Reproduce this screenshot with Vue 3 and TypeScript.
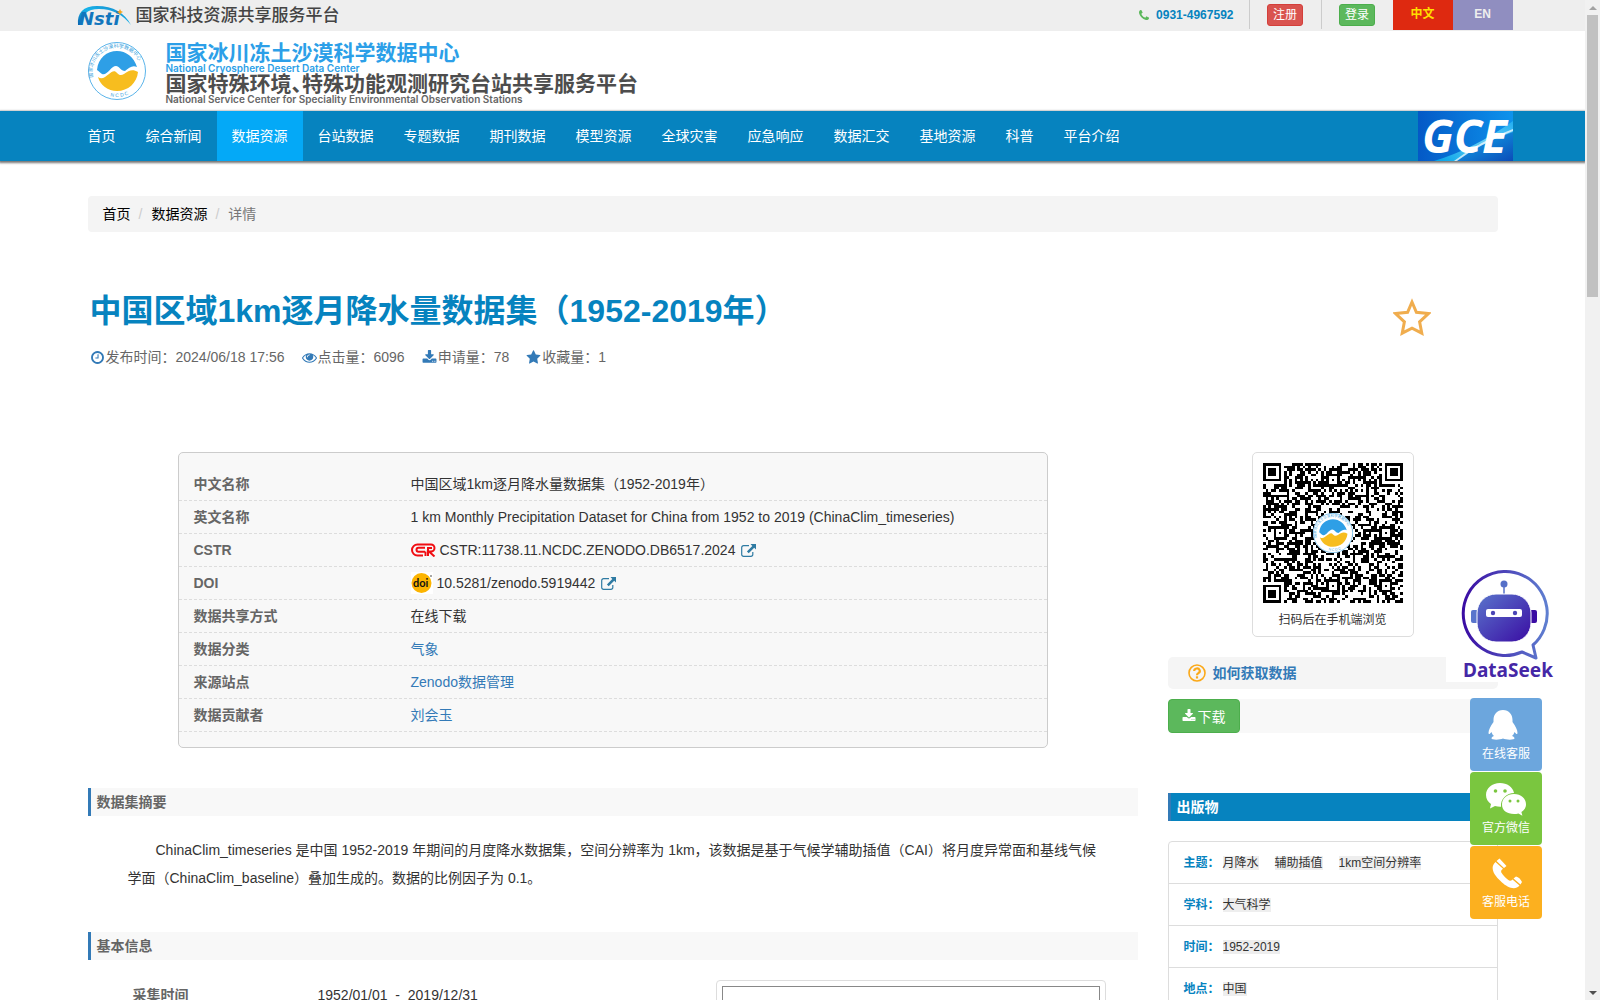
<script setup lang="ts">
interface NavItem {
  label: string
  active?: boolean
}

const navItems: NavItem[] = [
  { label: '首页' },
  { label: '综合新闻' },
  { label: '数据资源', active: true },
  { label: '台站数据' },
  { label: '专题数据' },
  { label: '期刊数据' },
  { label: '模型资源' },
  { label: '全球灾害' },
  { label: '应急响应' },
  { label: '数据汇交' },
  { label: '基地资源' },
  { label: '科普' },
  { label: '平台介绍' },
]

interface Detail {
  label: string
  value: string
  kind?: 'cstr' | 'doi' | 'link'
}

const details: Detail[] = [
  { label: '中文名称', value: '中国区域1km逐月降水量数据集（1952-2019年）' },
  { label: '英文名称', value: '1 km Monthly Precipitation Dataset for China from 1952 to 2019 (ChinaClim_timeseries)' },
  { label: 'CSTR', value: 'CSTR:11738.11.NCDC.ZENODO.DB6517.2024', kind: 'cstr' },
  { label: 'DOI', value: '10.5281/zenodo.5919442', kind: 'doi' },
  { label: '数据共享方式', value: '在线下载' },
  { label: '数据分类', value: '气象', kind: 'link' },
  { label: '来源站点', value: 'Zenodo数据管理', kind: 'link' },
  { label: '数据贡献者', value: '刘会玉', kind: 'link' },
]

const facets: { label: string; tags: string[] }[] = [
  { label: '主题：', tags: ['月降水', '辅助插值', '1km空间分辨率'] },
  { label: '学科：', tags: ['大气科学'] },
  { label: '时间：', tags: ['1952-2019'] },
  { label: '地点：', tags: ['中国'] },
]

const icons = {
  phone:
    'M1408 1112q0 27-10 70.5t-21 68.5q-21 50-122 106-94 51-186 51-27 0-52.5-3.5t-57.5-12.5-47.5-14.5-55.5-20.5-49-18q-98-35-175-83-128-79-264.5-215.5t-215.5-264.5q-48-77-83-175-3-9-18-49t-20.5-55.5-14.5-47.5-12.5-57.5-3.5-52.5q0-92 51-186 56-101 106-122 25-11 68.5-21t70.5-10q14 0 21 3 18 6 53 76 11 19 30 54t35 63.5 31 53.5q3 4 17.5 25t21.5 35.5 7 28.5q0 20-28.5 50t-62 55-62 53-28.5 46q0 9 5 22.5t8.5 20.5 14 24 11.5 19q76 137 174 235t235 174q2 1 19 11.5t24 14 20.5 8.5 22.5 5q18 0 46-28.5t53-62 55-62 50-28.5q14 0 28.5 7t35.5 21.5 25 17.5q25 15 53.5 31t63.5 35 54 30q70 35 76 53 3 7 3 21z',
  clock:
    'M1024 544v448q0 14-9 23t-23 9h-320q-14 0-23-9t-9-23v-64q0-14 9-23t23-9h224v-352q0-14 9-23t23-9h64q14 0 23 9t9 23zm416 352q0-148-73-273t-198-198-273-73-273 73-198 198-73 273 73 273 198 198 273 73 273-73 198-198 73-273zm224 0q0 209-103 385.5t-279.5 279.5-385.5 103-385.5-103-279.5-279.5-103-385.5 103-385.5 279.5-279.5 385.5-103 385.5 103 279.5 279.5 103 385.5z',
  eye: 'M1664 960q-152-236-381-353 61 104 61 225 0 185-131.5 316.5t-316.5 131.5-316.5-131.5-131.5-316.5q0-121 61-225-229 117-381 353 133 205 333.5 326.5t434.5 121.5 434.5-121.5 333.5-326.5zm-720-384q0-20-14-34t-34-14q-125 0-214.5 89.5t-89.5 214.5q0 20 14 34t34 14 34-14 14-34q0-86 61-147t147-61q20 0 34-14t14-34zm848 384q0 34-20 69-140 230-376.5 368.5t-499.5 138.5-499.5-139-376.5-368q-20-35-20-69t20-69q140-229 376.5-368t499.5-139 499.5 139 376.5 368q20 35 20 69z',
  download:
    'M1344 1344q0-26-19-45t-45-19-45 19-19 45 19 45 45 19 45-19 19-45zm256 0q0-26-19-45t-45-19-45 19-19 45 19 45 45 19 45-19 19-45zm128-224v320q0 40-28 68t-68 28h-1472q-40 0-68-28t-28-68v-320q0-40 28-68t68-28h465l135 136q58 56 136 56t136-56l136-136h464q40 0 68 28t28 68zm-325-569q17 41-14 70l-448 448q-18 19-45 19t-45-19l-448-448q-31-29-14-70 17-39 59-39h256v-448q0-26 19-45t45-19h256q26 0 45 19t19 45v448h256q42 0 59 39z',
  star: 'M1728 647q0 22-26 48l-363 354 86 500q1 7 1 20 0 21-10.5 35.5t-30.5 14.5q-19 0-40-12l-449-236-449 236q-22 12-40 12-21 0-31.5-14.5t-10.5-35.5q0-6 2-20l86-500-364-354q-25-27-25-48 0-37 56-46l502-73 225-455q19-41 49-41t49 41l225 455 502 73q56 9 56 46z',
}

const stats = [
  { icon: icons.clock, label: '发布时间：', value: '2024/06/18 17:56' },
  { icon: icons.eye, label: '点击量：', value: '6096' },
  { icon: icons.download, label: '申请量：', value: '78' },
  { icon: icons.star, label: '收藏量：', value: '1' },
]

// Version 9 QR symbol: fixed function patterns with a seeded data area.
const QR_SIZE = 53

function buildQr(): string {
  const cells: boolean[][] = []
  let seed = 20190607
  for (let y = 0; y < QR_SIZE; y++) {
    const row: boolean[] = []
    for (let x = 0; x < QR_SIZE; x++) {
      seed = (seed * 1103515245 + 12345) % 2147483648
      row.push(seed / 2147483648 > 0.5)
    }
    cells.push(row)
  }
  for (let i = 0; i < QR_SIZE; i++) {
    cells[6][i] = i % 2 === 0
    cells[i][6] = i % 2 === 0
  }
  const square = (cx: number, cy: number, reach: number, light: number[]) => {
    for (let dy = -reach; dy <= reach; dy++) {
      for (let dx = -reach; dx <= reach; dx++) {
        const x = cx + dx
        const y = cy + dy
        if (x < 0 || y < 0 || x >= QR_SIZE || y >= QR_SIZE) continue
        cells[y][x] = !light.includes(Math.max(Math.abs(dx), Math.abs(dy)))
      }
    }
  }
  for (const cy of [6, 26, 46]) {
    for (const cx of [6, 26, 46]) square(cx, cy, 2, [1])
  }
  square(3, 3, 4, [2, 4])
  square(QR_SIZE - 4, 3, 4, [2, 4])
  square(3, QR_SIZE - 4, 4, [2, 4])
  let d = ''
  cells.forEach((row, y) => row.forEach((on, x) => { if (on) d += `M${x} ${y}h1v1h-1z` }))
  return d
}

const qrPath = buildQr()
</script>

<template>
  <div class="window">
    <div class="page">
      <svg class="defs" width="0" height="0" aria-hidden="true">
        <defs>
          <path id="ring-top" d="M7 41A24.500 24.500 0 1 1 51 41" />
          <path id="ring-bottom" d="M15 51A27 27 0 0 0 43 51" />
          <symbol id="emblem" viewBox="0 0 58 58">
            <circle cx="29" cy="29" r="29" fill="#fff" />
            <circle cx="29" cy="29" r="28.500" fill="none" stroke="#5ab4ea" stroke-width="1" />
            <path d="M9 28C10 16 19 9 29 9c9 0 17 6 20 16-5-2-8 1-12 4-4 0-6-5-9-5-5 0-9 10-14 8-2-1-3-3-5-4z" fill="#2e9fe6" />
            <path d="M10 35c4 3 7 0 11-3 3-3 6-4 8-1 2 2 4 3 7 1 5-4 9-5 14-2-1 11-10 19-21 19-9 0-17-6-19-14z" fill="#f7bd1f" />
            <text font-size="5" fill="#3a9fdc" font-family="Noto Sans CJK SC"><textPath href="#ring-top" startOffset="6">国家冰川冻土沙漠科学数据中心</textPath></text>
            <text font-size="5" fill="#3a9fdc" font-family="Liberation Sans"><textPath href="#ring-bottom" startOffset="8">N C D C</textPath></text>
          </symbol>
          <symbol id="external" viewBox="0 0 15 13">
            <path d="M8 1.700H2.500a1.800 1.800 0 0 0-1.800 1.800v7a1.800 1.800 0 0 0 1.800 1.800h7.500a1.800 1.800 0 0 0 1.800-1.800V8" fill="none" stroke="currentColor" stroke-width="1.200" />
            <path d="M9.500 0H15v5.500l-1.800-1.800L7.700 9.200 5.900 7.400l5.400-5.500z" fill="currentColor" />
          </symbol>
        </defs>
      </svg>

      <div class="topbar">
        <div class="container topbar-row">
          <a class="platform" href="#">
            <svg class="nsti" width="54" height="22" viewBox="0 0 54 22">
              <defs>
                <linearGradient id="swoosh" x1="0" y1="1" x2="1" y2="0">
                  <stop offset="0" stop-color="#0a62ad" />
                  <stop offset=".5" stop-color="#16b4ea" />
                  <stop offset="1" stop-color="#1b7fc4" />
                </linearGradient>
              </defs>
              <path d="M1 20C0 8 6 1 20 1c16 0 28 7 34 19-8-10-18-16-32-16C10 4 5 9 4 20z" fill="url(#swoosh)" />
              <text x="2" y="20" font-size="18" font-weight="bold" font-style="italic" font-family="DejaVu Sans" fill="#1276bd">Nsti</text>
              <path d="M43 4l1 2 2 1-2 1-1 2-1-2-2-1 2-1z" fill="#f6a51c" />
            </svg>
            <span>国家科技资源共享服务平台</span>
          </a>
          <div class="tools">
            <a class="hotline" href="#">
              <svg width="10" height="10" viewBox="0 0 1408 1408"><path :d="icons.phone" fill="currentColor" /></svg>
              <span>0931-4967592</span>
            </a>
            <div class="tool"><button class="small-btn red" type="button">注册</button></div>
            <div class="tool"><button class="small-btn green" type="button">登录</button></div>
            <a class="lang zh" href="#">中文</a>
            <a class="lang en" href="#">EN</a>
          </div>
        </div>
      </div>

      <header class="container brand">
        <svg class="brand-mark" width="58" height="58"><use href="#emblem" /></svg>
        <div class="brand-text">
          <div class="brand-cn blue">国家冰川冻土沙漠科学数据中心</div>
          <div class="brand-en blue">National Cryosphere Desert Data Center</div>
          <div class="brand-cn second">国家特殊环境<span class="mark">、</span>特殊功能观测研究台站共享服务平台</div>
          <div class="brand-en">National Service Center for Speciality Environmental Observation Stations</div>
        </div>
      </header>

      <nav class="nav">
        <div class="container nav-row">
          <a v-for="item in navItems" :key="item.label" href="#" :class="{ active: item.active }">{{ item.label }}</a>
          <svg class="gce" width="95" height="50" viewBox="0 0 95 50">
            <defs>
              <linearGradient id="sky" x1="0" y1="0" x2="1" y2="0">
                <stop offset="0" stop-color="#0459c6" />
                <stop offset="1" stop-color="#0d93ec" />
              </linearGradient>
              <linearGradient id="earth" x1="0" y1="0" x2="1" y2="1">
                <stop offset="0" stop-color="#13b5f4" />
                <stop offset="1" stop-color="#0b4cb8" />
              </linearGradient>
              <linearGradient id="glow" x1="0" y1="1" x2="1" y2="0">
                <stop offset="0" stop-color="#06b4ee" />
                <stop offset=".6" stop-color="#7fe0fb" />
                <stop offset="1" stop-color="#25b4f3" />
              </linearGradient>
            </defs>
            <rect width="95" height="50" fill="url(#sky)" />
            <path d="M34 50Q60 26 95 20V50z" fill="url(#earth)" />
            <path d="M16 50Q56 38 95 10V21Q62 32 38 50z" fill="url(#glow)" opacity=".8" />
            <path d="M36 50Q62 30 95 18V20Q62 33 39 50z" fill="#fff" opacity=".7" />
            <text x="4" y="42" font-size="46" font-weight="bold" font-style="italic" font-family="Open Sans" fill="#fff">GCE</text>
          </svg>
        </div>
      </nav>

      <main class="container">
        <ol class="breadcrumb">
          <li><a href="#">首页</a></li>
          <li><a href="#">数据资源</a></li>
          <li>详情</li>
        </ol>

        <div class="heading">
          <div class="heading-main">
            <h1>中国区域1km逐月降水量数据集（1952-2019年）</h1>
            <ul class="stats">
              <li v-for="s in stats" :key="s.label">
                <svg width="15" height="15" viewBox="0 0 1792 1792"><path :d="s.icon" fill="currentColor" /></svg>
                <span>{{ s.label }}{{ s.value }}</span>
              </li>
            </ul>
          </div>
          <button class="favorite" type="button" aria-label="收藏">
            <svg width="38" height="38" viewBox="0 0 38 38">
              <path d="M19 4l4.400 10.300 12 1.300-8.800 8.200 2.200 11.400L19 30.200 9.200 35.200l2.200-11.400-8.800-8.200 12-1.300z" fill="none" stroke="#f0ad4e" stroke-width="3" />
            </svg>
          </button>
        </div>

        <div class="columns">
          <div class="primary">
            <dl class="details">
              <div v-for="d in details" :key="d.label" class="detail">
                <dt>{{ d.label }}</dt>
                <dd>
                  <svg v-if="d.kind === 'cstr'" width="25" height="14" viewBox="0 0 25 14" fill="none" stroke="#f00d12" stroke-width="2">
                    <path d="M12 12.500H6.500a5.500 5.500 0 0 1 0-11H20a3.500 3.500 0 0 1 0 7H18l5.500 5" />
                    <path d="M14 4.800H7.500a2 2 0 0 0 0 4H14M14.500 8.500V13M17 13V5h4" />
                  </svg>
                  <svg v-if="d.kind === 'doi'" width="22" height="22" viewBox="0 0 22 22">
                    <rect width="22" height="22" fill="#fff" />
                    <circle cx="10.500" cy="11" r="10" fill="#fcb400" />
                    <circle cx="20" cy="4" r="1" fill="#888" />
                    <text x="2" y="15" font-size="11" font-weight="bold" font-family="Lato" fill="#111">doi</text>
                  </svg>
                  <a v-if="d.kind === 'link'" href="#">{{ d.value }}</a>
                  <span v-else>{{ d.value }}</span>
                  <a v-if="d.kind === 'cstr' || d.kind === 'doi'" class="out" href="#" aria-label="打开链接">
                    <svg width="15" height="13"><use href="#external" /></svg>
                  </a>
                </dd>
              </div>
            </dl>

            <h2 class="section-title">数据集摘要</h2>
            <p class="abstract">
              ChinaClim_timeseries 是中国 1952-2019 年期间的月度降水数据集，空间分辨率为 1km，该数据是基于气候学辅助插值（CAI）将月度异常面和基线气候学面（ChinaClim_baseline）叠加生成的。数据的比例因子为 0.1。
            </p>

            <h2 class="section-title">基本信息</h2>
            <div class="basics">
              <dl class="basic-list">
                <dt>采集时间</dt>
                <dd>1952/01/01&nbsp; -&nbsp; 2019/12/31</dd>
              </dl>
              <div class="map-frame"><div class="map"></div></div>
            </div>
          </div>

          <aside class="secondary">
            <div class="qr-card">
              <div class="qr">
                <svg width="140" height="140" :viewBox="`0 0 ${QR_SIZE} ${QR_SIZE}`" shape-rendering="crispEdges"><path :d="qrPath" /></svg>
                <svg class="qr-mark" width="40" height="40"><use href="#emblem" /></svg>
              </div>
              <div class="qr-label">扫码后在手机端浏览</div>
            </div>

            <a class="howto" href="#">
              <svg width="18" height="18" viewBox="0 0 18 18" fill="none" stroke="#fba919" stroke-width="1.600">
                <circle cx="9" cy="9" r="8" />
                <path d="M6.200 7a2.800 2.500 0 1 1 4.200 2.100C9.400 9.700 9 10 9 11.200" stroke-width="2.200" />
                <path d="M9 12.300v2.200" stroke-width="2.200" />
              </svg>
              <span>如何获取数据</span>
            </a>

            <div class="download-bar">
              <button class="download" type="button">
                <svg width="14" height="14" viewBox="0 0 1792 1792"><path :d="icons.download" fill="currentColor" /></svg>
                <span>下载</span>
              </button>
            </div>

            <h2 class="side-title">出版物</h2>
            <ul class="facets">
              <li v-for="f in facets" :key="f.label">
                <strong>{{ f.label }}</strong>
                <span class="tags"><span v-for="t in f.tags" :key="t" class="tag">{{ t }}</span></span>
              </li>
            </ul>
          </aside>
        </div>
      </main>

      <a class="seek" href="#">
        <svg width="90" height="90" viewBox="0 0 90 90">
          <defs>
            <linearGradient id="seek-ring" x1="0" y1="0" x2="1" y2="0">
              <stop offset="0" stop-color="#3a0ca3" />
              <stop offset="1" stop-color="#5f7fd0" />
            </linearGradient>
            <linearGradient id="seek-head" x1="0" y1="0" x2="1" y2="1">
              <stop offset="0" stop-color="#5a75cc" />
              <stop offset="1" stop-color="#3a0ca3" />
            </linearGradient>
          </defs>
          <path d="M63 82A42 42 0 1 1 74 75l3 13z" fill="none" stroke="url(#seek-ring)" stroke-width="3" stroke-linejoin="round" />
          <path d="M45 14v14" stroke="#5670c8" stroke-width="1.500" />
          <circle cx="45" cy="14" r="3.500" fill="#5670c8" />
          <rect x="12" y="40" width="8" height="13" rx="2" fill="#5a75cc" />
          <rect x="70" y="40" width="8" height="13" rx="2" fill="#3a0ca3" />
          <rect x="18" y="24" width="54" height="48" rx="19" fill="url(#seek-head)" stroke="#fff" stroke-width="1" />
          <rect x="27" y="39" width="36" height="8" rx="2" fill="#fff" />
          <circle cx="34" cy="43" r="2.200" fill="#4a45b5" />
          <circle cx="56" cy="43" r="2.200" fill="#4a45b5" />
        </svg>
        <span>DataSeek</span>
      </a>

      <div class="contact">
        <button class="service" type="button">
          <svg width="40" height="34" viewBox="3 1 40 34" fill="#fff">
            <path d="M20 3c-6 0-9.500 4.500-9.500 10v2c-3 4-5 8-5 11 0 2 1.500 1 3-1 .5 2 1.500 3 2.500 4-2 .8-2.500 1.500-2.500 2.200 0 2 8.500 1.800 11.500.3 3 1.500 11.500 1.700 11.500-.3 0-.7-.5-1.400-2.500-2.200 1-1 2-2 2.500-4 1.500 2 3 3 3 1 0-3-2-7-5-11v-2c0-5.500-3.500-10-9.500-10z" />
          </svg>
          <span>在线客服</span>
        </button>
        <button class="service wechat" type="button">
          <svg width="40" height="34" viewBox="0 0 40 34">
            <path d="M14 1C6 1 0 6 0 13c0 4 2 7 5 9l-1 4.500 5-2.500c2 .5 4 .8 6 .7C14 17 21 11 28 11 27 5 21 1 14 1z" fill="#fff" />
            <path d="M28 12c-7 0-12 4.500-12 10.500S21 32 28 32c1.600 0 3-.2 4.400-.6l4 2.300-1-3.700c3-2 4.600-4.500 4.600-7.500C40 16.500 35 12 28 12z" fill="#fff" />
            <g fill="#7ac63f"><circle cx="9.500" cy="9" r="1.800" /><circle cx="19" cy="9" r="1.800" /><circle cx="24" cy="19" r="1.500" /><circle cx="32" cy="19" r="1.500" /></g>
          </svg>
          <span>官方微信</span>
        </button>
        <button class="service call" type="button">
          <svg width="40" height="34" viewBox="1 0 40 34" fill="#fff">
            <path d="M10.500 6C3 13 12 22 17 26.500S30 35 34.500 29.500L27.500 23.500c-1.500 1.500-3 1.500-4.500.3-3-2.500-5-4.800-6.500-7-.8-1.500-.3-2.800 1.500-4z" />
            <path d="M11.500 5l3-2.500 7 7.500-2.500 2zM28.500 22.500l2.500-2c2.500.5 4.500 2.500 6 5.500L35.500 28.500z" />
          </svg>
          <span>客服电话</span>
        </button>
      </div>
    </div>

    <div class="scrollbar" aria-hidden="true">
      <span class="arrow up"></span>
      <span class="thumb"></span>
      <span class="arrow down"></span>
    </div>
  </div>
</template>

<style>
body {
  margin: 0;
}
</style>

<style scoped>
* {
  box-sizing: border-box;
}

.window {
  display: flex;
  height: 100vh;
  overflow: hidden;
  font-family: "Liberation Sans", "Noto Sans CJK SC", sans-serif;
  font-size: 14px;
  line-height: 20px;
  color: #333;
}

.page {
  position: relative;
  flex: 1;
  min-width: 0;
  overflow: hidden;
  background: #fff;
}

.defs {
  position: absolute;
}

a {
  color: #337ab7;
  text-decoration: none;
}

button {
  font-family: inherit;
  cursor: pointer;
}

svg {
  display: block;
  flex: none;
}

ul,
ol,
dl,
dd,
h1,
h2,
p {
  margin: 0;
  padding: 0;
  list-style: none;
}

.container {
  width: 100%;
  max-width: 1440px;
  margin: 0 auto;
  padding: 0 15px;
}

/* top bar */
.topbar {
  height: 31px;
  background: #eee;
}

.topbar-row {
  display: flex;
  justify-content: space-between;
  padding: 0;
}

.platform {
  display: flex;
  align-items: center;
  gap: 5px;
  height: 31px;
  padding-left: 4px;
  font-size: 17px;
  font-weight: 500;
  color: #444;
}

.nsti,
.gce {
  overflow: visible;
}

.tools {
  display: flex;
  height: 30px;
}

.hotline {
  display: flex;
  align-items: center;
  gap: 7px;
  height: 29px;
  padding-right: 15px;
  font-size: 12px;
  font-weight: bold;
  color: #0683bf;
}

.hotline svg {
  color: #5cb85c;
}

.tool {
  display: flex;
  align-items: center;
  justify-content: center;
  width: 72px;
  height: 29px;
  border-left: 1px solid #ccc;
}

.small-btn {
  height: 22px;
  padding: 0 5px;
  border: 1px solid;
  border-radius: 3px;
  font-size: 12px;
  line-height: 20px;
  color: #fff;
}

.red {
  background: #d9534f;
  border-color: #d43f3a;
}

.green {
  background: #5cb85c;
  border-color: #4cae4c;
}

.lang {
  width: 60px;
  font-size: 12px;
  font-weight: bold;
  line-height: 28px;
  text-align: center;
}

.zh {
  background: #de2910;
  color: #ffde00;
}

.en {
  background: #908ec0;
  color: #eee;
}

/* brand */
.brand {
  display: flex;
  gap: 20px;
  height: 80px;
  padding-top: 11px;
}

.brand-text {
  font-weight: bold;
  color: #4d4d4d;
}

.brand-cn {
  font-size: 21px;
  line-height: 22px;
}

.brand-en {
  font-family: "Inter", "Liberation Sans", sans-serif;
  font-size: 10px;
  font-weight: 600;
  line-height: 8px;
  color: #666;
}

.second {
  margin-top: 1px;
}

.mark {
  font-feature-settings: "halt";
}

.brand-text .blue {
  color: #2c9fe8;
}

/* navigation */
.nav {
  position: relative;
  height: 50px;
  background: #0683bf;
  box-shadow: 0 1px 2px 1px #777;
}

.nav-row {
  display: flex;
  padding: 0;
}

.nav a {
  padding: 0 15px;
  line-height: 50px;
  color: #fff;
}

.nav a.active {
  background: #04a9f7;
}

.gce {
  margin-left: auto;
}

/* breadcrumb */
.breadcrumb {
  display: flex;
  margin-top: 35px;
  padding: 8px 15px;
  border-radius: 4px;
  background: #f4f4f4;
  color: #777;
}

.breadcrumb a {
  color: #000;
}

.breadcrumb li + li::before {
  content: "/";
  padding: 0 9px 0 8px;
  color: #ccc;
}

/* heading */
.heading {
  display: flex;
  justify-content: space-between;
  margin-top: 57px;
  padding: 0 67px 0 2px;
}

h1 {
  font-size: 32px;
  font-weight: bold;
  line-height: 44px;
  color: #0683bf;
}

.stats {
  display: flex;
  gap: 17px;
  margin-top: 14px;
  color: #666;
}

.stats li {
  display: flex;
  align-items: center;
  gap: 1px;
}

.stats svg {
  color: #337ab7;
}

.favorite {
  align-self: flex-start;
  margin-top: 9px;
  padding: 0;
  border: 0;
  background: none;
}

/* columns */
.columns {
  display: flex;
  gap: 30px;
  margin-top: 85px;
}

.primary {
  flex: 3;
  min-width: 0;
}

.secondary {
  flex: 0 0 330px;
}

.details {
  margin: 0 90px 40px;
  padding: 15px 0;
  border: 1px solid #ccc;
  border-radius: 5px;
  background: #f8f8f8;
}

.detail {
  display: flex;
  height: 33px;
  border-bottom: 1px dashed #ddd;
  line-height: 32px;
}

.detail dt {
  flex: 0 0 25%;
  padding-left: 15px;
  font-weight: bold;
  color: #666;
}

.detail dd {
  display: flex;
  align-items: center;
  gap: 4px;
  padding-left: 15px;
}

.out {
  margin-left: 2px;
  color: #2f7ba3;
}

.section-title,
.side-title {
  padding-left: 6px;
  border-left: 3px solid #337ab7;
  background: #f8f8f8;
  font-size: 14px;
  font-weight: bold;
  line-height: 28px;
  color: #666;
}

.abstract {
  margin: 20px 0 40px;
  padding: 0 40px;
  line-height: 28px;
  text-indent: 28px;
}

.basics {
  display: flex;
  justify-content: space-between;
  margin-top: 20px;
  padding: 0 32px 0 45px;
}

.basic-list {
  display: flex;
  line-height: 30px;
}

.basic-list dt {
  width: 185px;
  font-weight: bold;
  color: #666;
}

.map-frame {
  width: 390px;
  padding: 5px;
  border: 1px solid #ddd;
  border-radius: 4px;
}

.map {
  height: 300px;
  border: 1px solid #888;
}

/* side column */
.qr-card {
  width: 162px;
  margin: 0 auto 20px;
  padding: 10px 10px 6px;
  border: 1px solid #ddd;
  border-radius: 5px;
}

.qr {
  position: relative;
}

.qr-mark {
  position: absolute;
  top: 50px;
  left: 50px;
}

.qr-label {
  margin-top: 7px;
  font-size: 12px;
  text-align: center;
}

.howto {
  display: flex;
  align-items: center;
  gap: 7px;
  height: 32px;
  margin-bottom: 10px;
  padding: 0 20px;
  border-radius: 5px;
  background: #f5f5f5;
  font-weight: bold;
}

.download-bar {
  margin-bottom: 60px;
  border-radius: 4px;
  background: #f8f8f8;
}

.download {
  display: flex;
  align-items: center;
  gap: 2px;
  height: 34px;
  padding: 0 13px;
  border: 1px solid #4cae4c;
  border-radius: 4px;
  background: #5cb85c;
  font-size: 14px;
  color: #fff;
}

.side-title {
  margin-bottom: 20px;
  background: #0683bf;
  color: #fff;
}

.facets {
  border: 1px solid #ddd;
  border-radius: 4px;
  font-size: 12px;
}

.facets li {
  display: flex;
  align-items: center;
  gap: 3px;
  height: 42px;
  padding: 0 15px;
  border-bottom: 1px solid #ddd;
}

.facets strong {
  color: #0683bf;
}

.tags {
  display: flex;
  gap: 16px;
}

.tag {
  background: #eee;
  line-height: 14px;
}

/* floating widgets */
.seek {
  position: absolute;
  top: 562px;
  right: 15px;
  display: flex;
  flex-direction: column;
  align-items: center;
  width: 124px;
  height: 120px;
  padding-top: 8px;
  background: #fff;
  font-family: "Noto Sans", sans-serif;
  font-size: 19px;
  font-weight: bold;
  line-height: 20px;
  color: #4527a6;
}

.seek svg {
  margin-right: 8px;
}

.contact {
  position: absolute;
  top: 698px;
  right: 43px;
  display: flex;
  flex-direction: column;
  gap: 1px;
}

.service {
  display: flex;
  flex-direction: column;
  align-items: center;
  gap: 2px;
  width: 72px;
  height: 73px;
  padding: 10px 0 0;
  border: 0;
  border-radius: 4px;
  background: #6ca6dd;
  font-size: 12px;
  line-height: 20px;
  color: #fff;
}

.wechat {
  background: #7ac63f;
}

.call {
  background: #fcb01f;
}

/* window scrollbar */
.scrollbar {
  display: flex;
  flex-direction: column;
  align-items: center;
  width: 15px;
  background: #f1f1f1;
}

.arrow {
  margin: 6px 0 5px;
  border: 4px solid transparent;
  border-top-width: 0;
  border-bottom-color: #a3a3a3;
}

.thumb {
  width: 11px;
  height: 282px;
  background: #c1c1c1;
}

.down {
  margin-top: auto;
  border-top: 4px solid #505050;
  border-bottom-width: 0;
}
</style>
